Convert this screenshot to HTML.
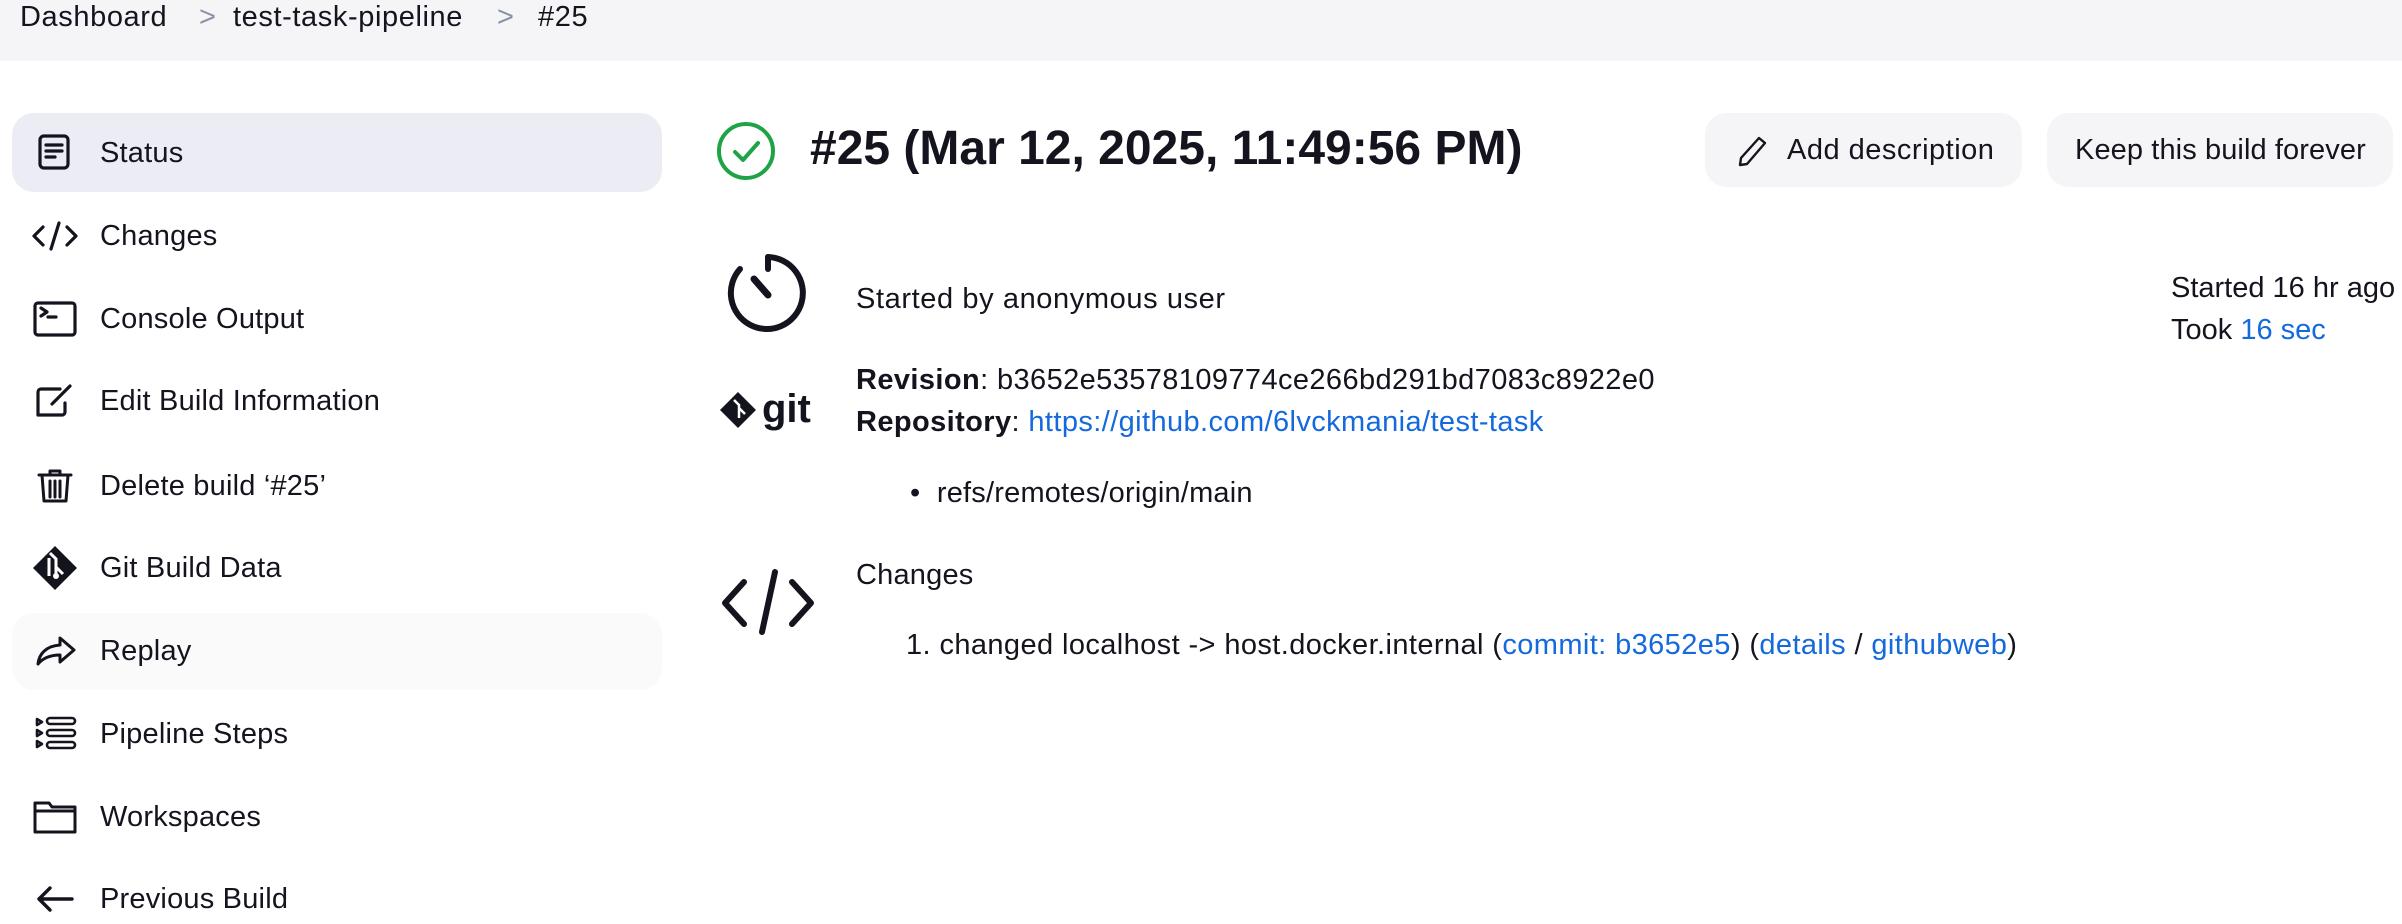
<!DOCTYPE html>
<html><head><meta charset="utf-8"><style>
*{margin:0;padding:0;box-sizing:border-box}
body{width:2402px;height:924px;overflow:hidden;background:#fff;font-family:"Liberation Sans",sans-serif;color:#14141f;position:relative}
.a{position:absolute;white-space:nowrap}
.bc{position:absolute;left:0;top:0;width:2402px;height:61px;background:#f5f5f7}
.bc span{position:absolute;top:0;font-size:29px;line-height:34px;letter-spacing:0.6px}
.sep{color:#8a93a6}
.hl{position:absolute;left:12px;top:113px;width:650px;height:79px;background:#ececf4;border-radius:22px}
.rp{position:absolute;left:12px;top:613px;width:650px;height:77px;background:#fafafb;border-radius:22px}
.it{position:absolute;left:100px;font-size:29px;line-height:34px;letter-spacing:0.2px}
.ic{position:absolute;left:30px;width:50px;height:50px}
.btn{position:absolute;top:113px;height:74px;background:#f5f5f7;border-radius:22px;font-size:29px;line-height:74px}
.t{font-size:29px;line-height:32px;letter-spacing:0.2px}
a{color:#1469dc;text-decoration:none}
</style></head><body>
<div class="bc">
<span style="left:20px">Dashboard</span>
<span class="sep" style="left:199px">&gt;</span>
<span style="left:233px">test-task-pipeline</span>
<span class="sep" style="left:497px">&gt;</span>
<span style="left:538px">#25</span>
</div>
<div class="hl"></div>
<div class="rp"></div>

<svg class="ic" style="top:128px" viewBox="0 0 50 50" fill="none" stroke="#14141f" stroke-width="3.2" stroke-linecap="round"><rect x="10" y="8" width="28" height="32" rx="4"/><path d="M16 17h16M16 23h16M16 29h9"/></svg>
<div class="it" style="top:136px">Status</div>
<svg class="ic" style="top:211px" viewBox="0 0 50 50" fill="none" stroke="#14141f" stroke-width="3.2" stroke-linecap="round" stroke-linejoin="round"><path d="M13 16l-9 9 9 9M37 16l9 9-9 9M29 12l-8 26"/></svg>
<div class="it" style="top:219px">Changes</div>
<svg class="ic" style="top:294px" viewBox="0 0 50 50" fill="none" stroke="#14141f" stroke-width="3.2" stroke-linecap="round" stroke-linejoin="round"><rect x="5" y="9" width="40" height="32" rx="3"/><path d="M11 14l6 4-6 4M18 23h8"/></svg>
<div class="it" style="top:302px">Console Output</div>
<svg class="ic" style="top:376px" viewBox="0 0 50 50" fill="none" stroke="#14141f" stroke-width="3.2" stroke-linecap="round" stroke-linejoin="round"><path d="M30 13H11a3 3 0 0 0-3 3v23h24a3 3 0 0 0 3-3V27M22 28l18-18"/></svg>
<div class="it" style="top:384px">Edit Build Information</div>
<svg class="ic" style="top:461px" viewBox="0 0 50 50" fill="none" stroke="#14141f" stroke-width="3" stroke-linecap="round" stroke-linejoin="round"><path d="M9 14h32M20 14v-4h10v4M12 14l2 26h22l2-26M20 20v16M25 20v16M30 20v16"/></svg>
<div class="it" style="top:469px">Delete build ‘#25’</div>
<svg class="ic" style="top:543px" viewBox="0 0 50 50"><path d="M25 3L47 25 25 47 3 25z" fill="#14141f"/><path d="M20 10l6 6v16M26 24l7 7M19 15v18" stroke="#fff" stroke-width="3" fill="none"/><circle cx="26" cy="33" r="3" fill="#fff"/></svg>
<div class="it" style="top:551px">Git Build Data</div>
<svg class="ic" style="top:626px" viewBox="0 0 50 50" fill="none" stroke="#14141f" stroke-width="3" stroke-linejoin="round"><path d="M30 12l14 12-14 12v-7c-10 0-17 3-22 9 1-10 8-18 22-19z"/></svg>
<div class="it" style="top:634px">Replay</div>
<svg class="ic" style="top:709px" viewBox="0 0 50 50" fill="none" stroke="#14141f" stroke-width="2.6" stroke-linejoin="round"><path d="M7 10l5 3-5 3zM7 21l5 3-5 3zM7 32l5 3-5 3z"/><rect x="17" y="9" width="28" height="6" rx="3"/><rect x="17" y="21" width="28" height="6" rx="3"/><rect x="17" y="33" width="28" height="6" rx="3"/></svg>
<div class="it" style="top:717px">Pipeline Steps</div>
<svg class="ic" style="top:792px" viewBox="0 0 50 50" fill="none" stroke="#14141f" stroke-width="3" stroke-linejoin="round"><path d="M5 11h14l3 4h23v25H5zM5 19h40"/></svg>
<div class="it" style="top:800px">Workspaces</div>
<svg class="ic" style="top:874px" viewBox="0 0 50 50" fill="none" stroke="#14141f" stroke-width="3.4" stroke-linecap="round" stroke-linejoin="round"><path d="M42 25H9M20 14L9 25l11 11"/></svg>
<div class="it" style="top:882px">Previous Build</div>

<svg class="a" style="left:716px;top:121px" width="60" height="60" viewBox="0 0 60 60" fill="none" stroke="#1ea446" stroke-width="4" stroke-linecap="round" stroke-linejoin="round"><circle cx="30" cy="30" r="27"/><path d="M19 31l8 8 15-17"/></svg>
<div class="a" style="left:810px;top:120px;font-size:48px;font-weight:bold;line-height:58px;letter-spacing:0px">#25 (Mar 12, 2025, 11:49:56 PM)</div>

<div class="btn" style="left:1705px;width:317px"><svg class="a" style="left:32px;top:22px" width="32" height="32" viewBox="0 0 32 32" fill="none" stroke="#14141f" stroke-width="2.4" stroke-linejoin="round"><path d="M22 3l6 5L10 29l-7 1 1-7z"/></svg><span class="a" style="left:82px;letter-spacing:0.5px">Add description</span></div>
<div class="btn" style="left:2047px;width:346px"><span class="a" style="left:28px;letter-spacing:0.1px">Keep this build forever</span></div>

<svg class="a" style="left:726px;top:251px" width="84" height="84" viewBox="0 0 84 84" fill="none" stroke="#14141f" stroke-width="6" stroke-linecap="round"><path d="M42 6a36 36 0 1 1-28 12"/><path d="M42 6v12"/><path d="M28 28l14 16" stroke-width="7"/></svg>
<div class="a t" style="left:856px;top:283px;letter-spacing:0.6px">Started by anonymous user</div>
<div class="a t" style="left:2171px;top:272px;letter-spacing:0px">Started 16 hr ago</div>
<div class="a t" style="left:2171px;top:314px;letter-spacing:0px">Took <a>16 sec</a></div>

<svg class="a" style="left:718px;top:386px" width="100" height="50" viewBox="0 0 100 50"><path d="M20 6L38 24 20 42 2 24z" fill="#14141f"/><path d="M16 14l5 5v13M21 22l6 6" stroke="#fff" stroke-width="2.5" fill="none"/><text x="44" y="36" font-family="Liberation Sans,sans-serif" font-weight="bold" font-size="40" fill="#14141f">git</text></svg>
<div class="a t" style="left:856px;top:364px;letter-spacing:0.4px"><b>Revision</b>: b3652e53578109774ce266bd291bd7083c8922e0</div>
<div class="a t" style="left:856px;top:406px;letter-spacing:0.4px"><b>Repository</b>: <a>https://github.com/6lvckmania/test-task</a></div>
<div class="a t" style="left:910px;top:477px">•&nbsp;&nbsp;refs/remotes/origin/main</div>

<svg class="a" style="left:720px;top:566px" width="96" height="72" viewBox="0 0 96 72" fill="none" stroke="#14141f" stroke-width="6" stroke-linecap="round" stroke-linejoin="round"><path d="M24 16L5 37l19 21M72 16l19 21-19 21M55 6L42 66"/></svg>
<div class="a t" style="left:856px;top:559px">Changes</div>
<div class="a t" style="left:906px;top:629px;letter-spacing:0.4px">1. changed localhost -&gt; host.docker.internal (<a>commit: b3652e5</a>) (<a>details</a> / <a>githubweb</a>)</div>
</body></html>
